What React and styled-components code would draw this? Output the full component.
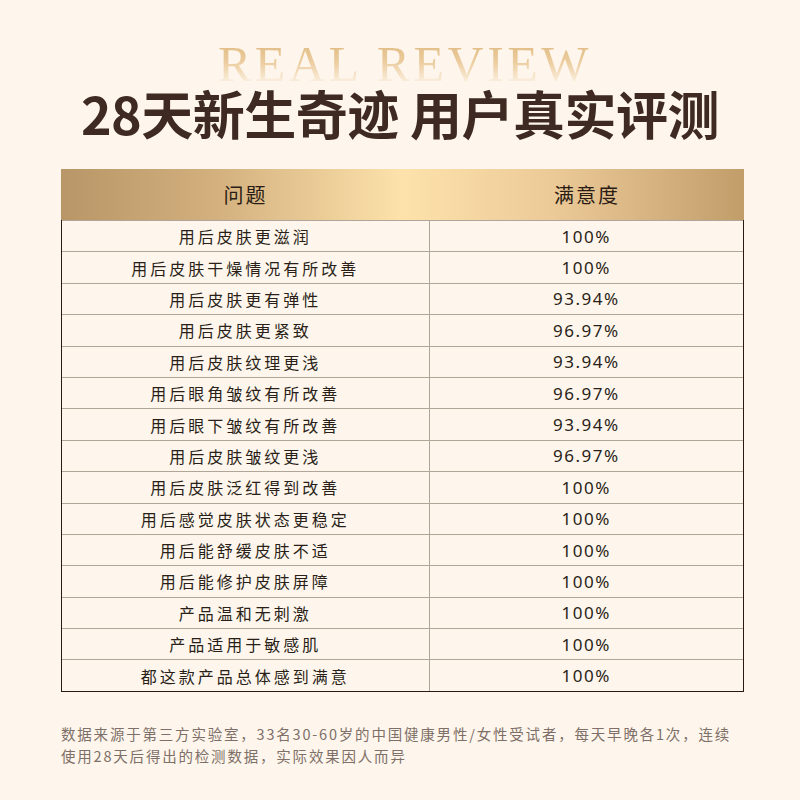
import React from 'react'
import styled, { createGlobalStyle } from 'styled-components'

const GlobalStyle = createGlobalStyle`
  html, body {
    margin: 0;
    padding: 0;
    background-color: #fef6ec;
  }
  * {
    box-sizing: border-box;
  }
`

const Page = styled.div`
  width: 800px;
  height: 800px;
  padding: 42px 56px 0 61px;
  background-color: #fef6ec;
  font-family: 'Noto Sans CJK SC', 'Noto Sans', sans-serif;
  overflow: hidden;
`

const Hero = styled.div`
  display: flex;
  flex-direction: column;
  align-items: center;
  margin-left: -61px;
  margin-right: -56px;
`

const Eyebrow = styled.div`
  font-family: 'Liberation Serif', 'DejaVu Serif', serif;
  font-size: 50px;
  line-height: 44px;
  letter-spacing: 3.5px;
  padding-left: 10px;
  background: linear-gradient(180deg, #e0bb82 0%, #ebcc9e 45%, #fcf1e2 95%);
  -webkit-background-clip: text;
  background-clip: text;
  color: transparent;
`

const Title = styled.h1`
  margin: 1px 0 0;
  font-family: 'Noto Sans CJK SC', sans-serif;
  font-weight: 700;
  font-size: 52px;
  line-height: 52px;
  letter-spacing: -0.5px;
  color: #3e2a22;
`

const Table = styled.div`
  margin-top: 30px;
  width: 683px;
`

const HeadRow = styled.div`
  display: grid;
  grid-template-columns: 369px 1fr;
  height: 51px;
  background: linear-gradient(
    90deg,
    #b99667 0%,
    #d2af7d 22%,
    #fde2ab 50%,
    #ecca98 72%,
    #c19d6a 100%
  );
`

const HeadCell = styled.div`
  display: flex;
  align-items: center;
  justify-content: center;
  font-size: 20px;
  letter-spacing: 2px;
  color: #2b1d14;
`

const Body = styled.div`
  border: 1.5px solid #2a1a12;
  border-top: none;
`

const Row = styled.div`
  display: grid;
  grid-template-columns: 367.5px 1fr;
  height: 31.4px;
  border-top: 1.5px solid #b0a597;
`

const Cell = styled.div`
  display: flex;
  align-items: center;
  justify-content: center;
  color: #2a1f18;
  ${(p) =>
    p.$num
      ? `
    font-family: 'Noto Sans', sans-serif;
    font-size: 17px;
    letter-spacing: 1.5px;
  `
      : `
    font-size: 16px;
    letter-spacing: 3px;
    border-right: 1.5px solid #b0a597;
  `}
`

const Note = styled.p`
  margin: 31px 0 0;
  width: 680px;
  font-size: 14.5px;
  line-height: 22px;
  letter-spacing: 1.8px;
  color: #7e7068;
`

const rows = [
  ['用后皮肤更滋润', '100%'],
  ['用后皮肤干燥情况有所改善', '100%'],
  ['用后皮肤更有弹性', '93.94%'],
  ['用后皮肤更紧致', '96.97%'],
  ['用后皮肤纹理更浅', '93.94%'],
  ['用后眼角皱纹有所改善', '96.97%'],
  ['用后眼下皱纹有所改善', '93.94%'],
  ['用后皮肤皱纹更浅', '96.97%'],
  ['用后皮肤泛红得到改善', '100%'],
  ['用后感觉皮肤状态更稳定', '100%'],
  ['用后能舒缓皮肤不适', '100%'],
  ['用后能修护皮肤屏障', '100%'],
  ['产品温和无刺激', '100%'],
  ['产品适用于敏感肌', '100%'],
  ['都这款产品总体感到满意', '100%'],
]

const App = () => {
  return (
    <Page>
      <GlobalStyle />
      <Hero>
        <Eyebrow>REAL REVIEW</Eyebrow>
        <Title>28天新生奇迹 用户真实评测</Title>
      </Hero>
      <Table>
        <HeadRow>
          <HeadCell>问题</HeadCell>
          <HeadCell>满意度</HeadCell>
        </HeadRow>
        <Body>
          {rows.map(([q, v]) => (
            <Row key={q}>
              <Cell>{q}</Cell>
              <Cell $num>{v}</Cell>
            </Row>
          ))}
        </Body>
      </Table>
      <Note>
        数据来源于第三方实验室，33名30-60岁的中国健康男性/女性受试者，每天早晚各1次，连续使用28天后得出的检测数据，实际效果因人而异
      </Note>
    </Page>
  )
}

export default App
